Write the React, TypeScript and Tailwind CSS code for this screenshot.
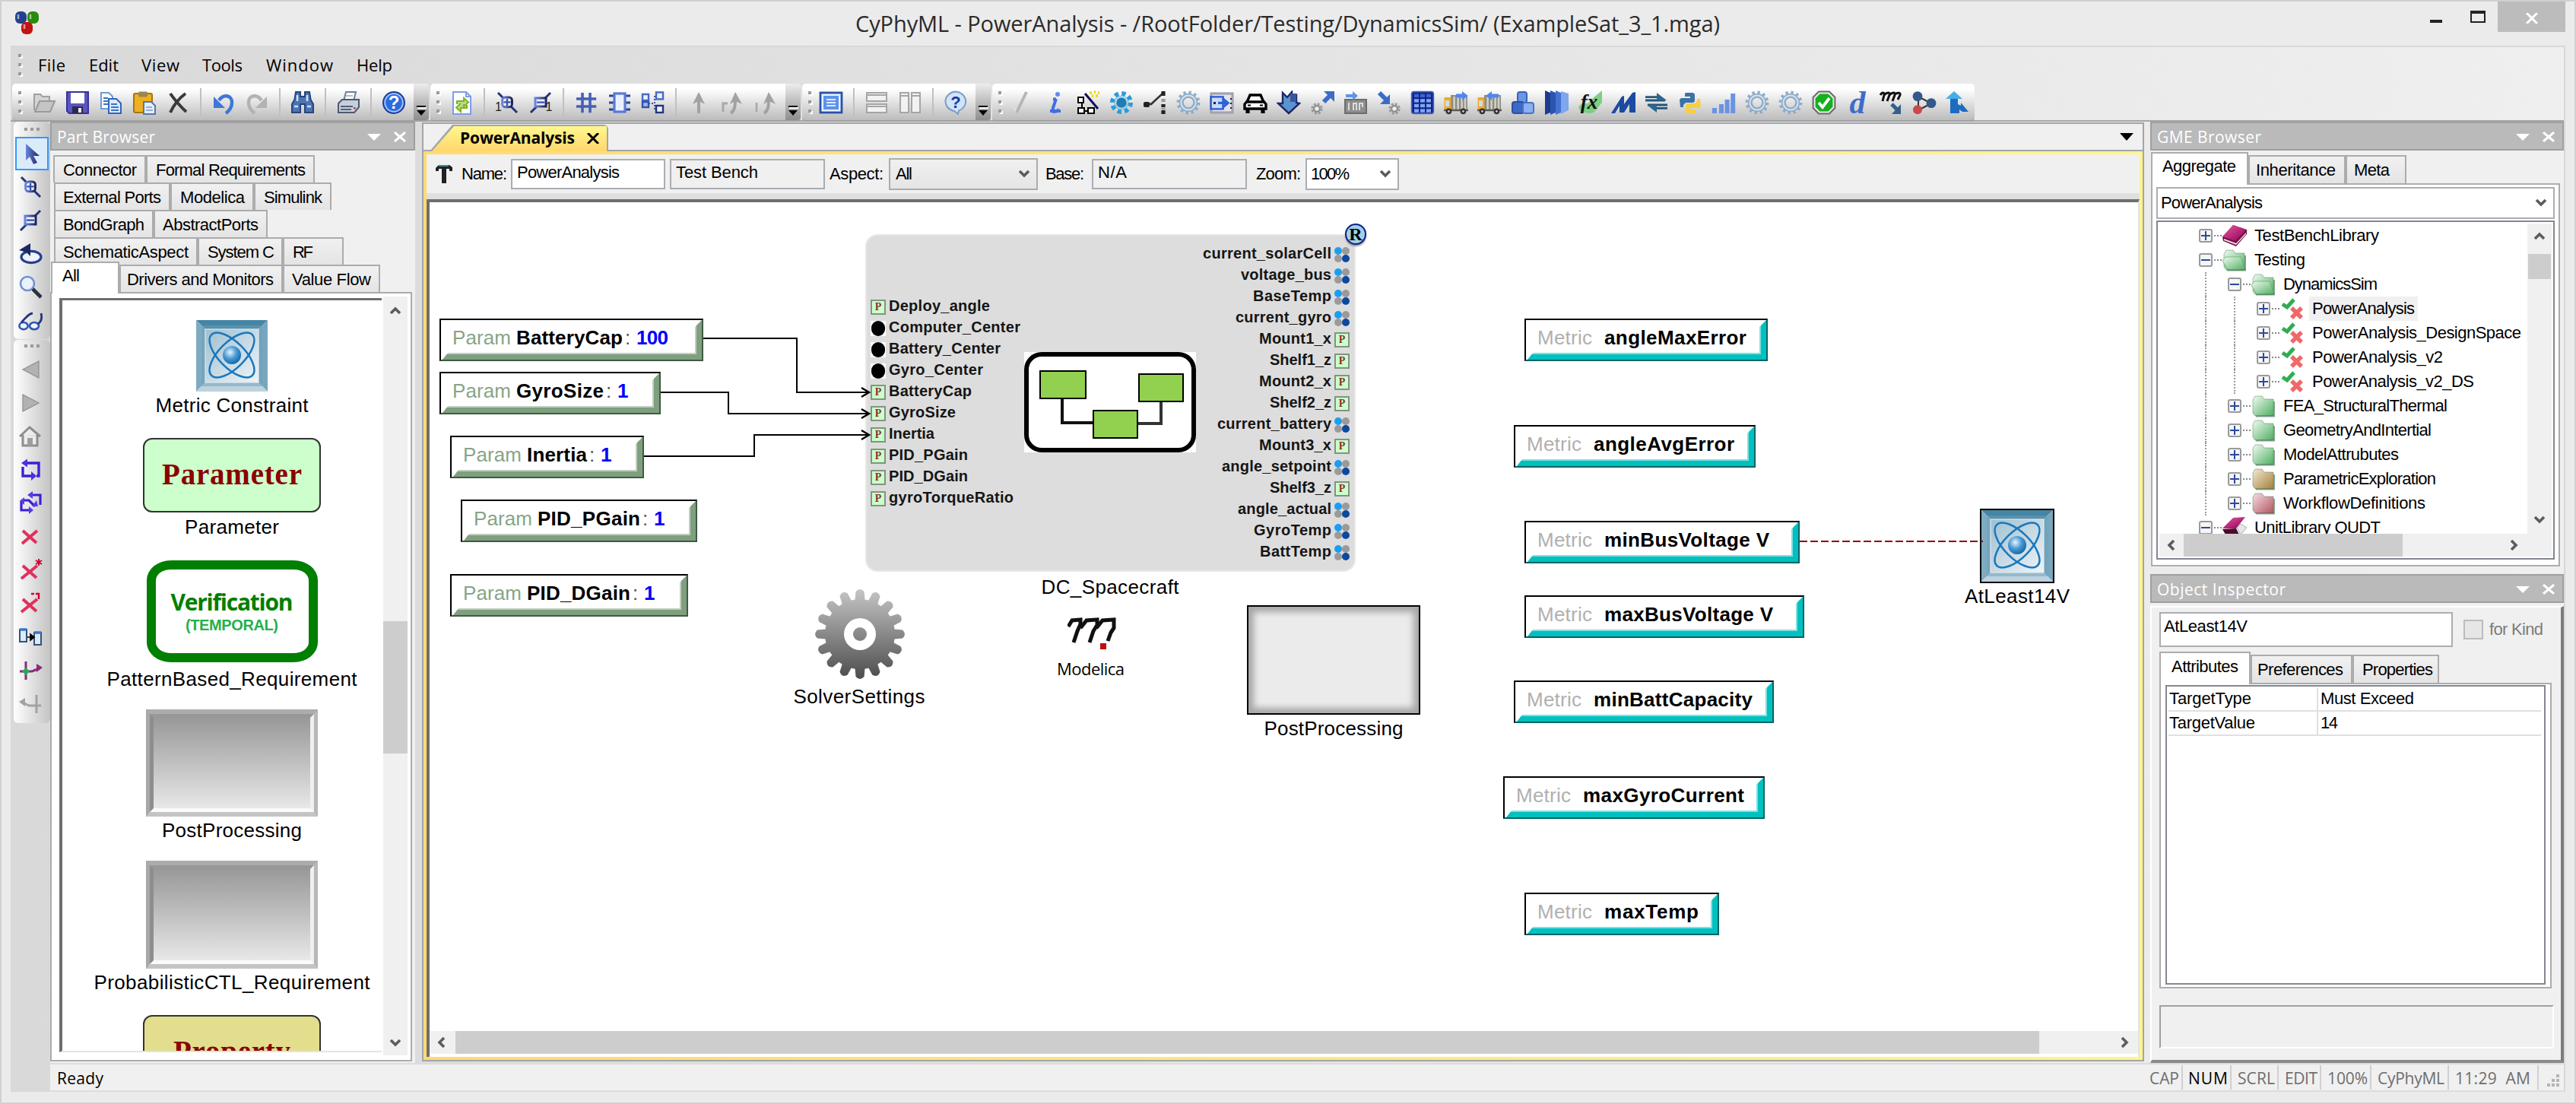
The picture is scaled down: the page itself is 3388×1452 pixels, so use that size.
import { useLayoutEffect, useRef, useState, type ReactNode } from "react";

/* Single line of text whose tracking is computed so it spans `w` pixels. */
function T({ w, className = "", children }: { w: number; className?: string; children: string }) {
  const ref = useRef<HTMLSpanElement>(null);
  const [ls, setLs] = useState(0);
  useLayoutEffect(() => {
    const el = ref.current;
    if (!el) return;
    el.style.letterSpacing = "0px";
    const natural = el.getBoundingClientRect().width;
    const v = children.length > 1 ? (w - natural) / (children.length - 1) : 0;
    el.style.letterSpacing = `${v}px`;
    setLs(v);
  }, [w, children]);
  return (
    <span className="block shrink-0 overflow-visible whitespace-pre" style={{ width: w }}>
      <span ref={ref} className={`inline-block whitespace-pre ${className}`} style={{ letterSpacing: ls }}>
        {children}
      </span>
    </span>
  );
}

const Svg = ({ children, className = "size-8" }: { children: ReactNode; className?: string }) => (
  <svg viewBox="0 0 16 16" className={`shrink-0 ${className}`} fill="none">
    {children}
  </svg>
);

const Defs = () => (
  <svg className="absolute size-0">
    <defs>
      <linearGradient id="blue" x1="0" y1="0" x2="1" y2="1">
        <stop offset="0" stopColor="#8fb4f5" />
        <stop offset="1" stopColor="#1b3f9c" />
      </linearGradient>
      <linearGradient id="navy" x1="0" y1="0" x2="1" y2="0">
        <stop offset="0" stopColor="#6a86e0" />
        <stop offset="1" stopColor="#1b2358" />
      </linearGradient>
      <linearGradient id="gearGrad" x1="0" y1="0" x2="0" y2="1">
        <stop offset="0" stopColor="#c6c6c6" />
        <stop offset="1" stopColor="#4c4c4c" />
      </linearGradient>
      <linearGradient id="inner" x1="0" y1="0" x2="1" y2="1">
        <stop offset="0" stopColor="#9ebfd0" />
        <stop offset="1" stopColor="#eef4f8" />
      </linearGradient>
      <radialGradient id="ball" cx="0.4" cy="0.35" r="0.7">
        <stop offset="0" stopColor="#eaf5ff" />
        <stop offset="0.5" stopColor="#4a9ad2" />
        <stop offset="1" stopColor="#0a64a8" />
      </radialGradient>
      <linearGradient id="gFolder" x1="0" y1="0" x2="1" y2="1">
        <stop offset="0" stopColor="#f0fbf1" />
        <stop offset="1" stopColor="#4fae62" />
      </linearGradient>
      <linearGradient id="bFolder" x1="0" y1="0" x2="1" y2="1">
        <stop offset="0" stopColor="#f3e8d2" />
        <stop offset="1" stopColor="#a5803c" />
      </linearGradient>
      <linearGradient id="rFolder" x1="0" y1="0" x2="1" y2="1">
        <stop offset="0" stopColor="#f8dde0" />
        <stop offset="1" stopColor="#b25563" />
      </linearGradient>
      <linearGradient id="book" x1="0" y1="0" x2="1" y2="1">
        <stop offset="0" stopColor="#e85aa8" />
        <stop offset="1" stopColor="#8c0050" />
      </linearGradient>
    </defs>
  </svg>
);

const Gear = ({ c = "#8fabc7" }: { c?: string }) => (
  <Svg>
    <circle cx="8" cy="8" r="6.6" stroke={c} strokeWidth="2.2" strokeDasharray="1.6 1.86" />
    <circle cx="8" cy="8" r="4.6" stroke={c} strokeWidth="3" />
    <circle cx="8" cy="8" r="4.8" stroke="#d3e2f0" strokeWidth="1" />
  </Svg>
);

const Truck = ({ back = false }: { back?: boolean }) => (
  <Svg>
    <rect x="4.500" y="3" width="11" height="10.500" fill="#8c8c84" />
    <path d="M6.800 4v8.500M9.300 4v8.500M11.800 4v8.500M14 4v8.500" stroke="#d0d0c8" strokeWidth="1.300" />
    <path d="M.3 4.500h4.400v9H.3z" fill="#f5a81c" />
    <path d="M1 6.500h2.500v4H1z" fill="#c6dcf2" />
    <path d="M0 13h16" stroke="#5a5a50" strokeWidth="1.200" />
    <circle cx="3.200" cy="13.700" r="1.900" fill="#333" />
    <circle cx="3.200" cy="13.700" r=".7" fill="#ccc" />
    <circle cx="12.700" cy="13.700" r="1.900" fill="#333" />
    <circle cx="12.700" cy="13.700" r=".7" fill="#ccc" />
    {back ? (
      <path d="M14 2.300H9.500V.5L5.500 3.500l4 3V4.800H14z" fill="#4f86f0" />
    ) : (
      <path d="M8 2.300h4V.5l3.800 3-3.800 3V4.800H8z" fill="#4f86f0" />
    )}
  </Svg>
);

const GreyUp = ({ k }: { k: number }) => (
  <Svg>
    <path d={k === 0 ? "M8 15V4" : "M7 15c3-2 3-5 3-11"} stroke="#a2a2a2" strokeWidth="2" />
    <path d={k === 0 ? "M8 1l4 8-4-2-4 2z" : "M10 1l4.500 8-4.500-2-3.500 2z"} fill="#a2a2a2" />
    {k === 1 && <path d="M2 14V8.500h3" stroke="#a8a8a8" strokeWidth="1.500" />}
    {k === 2 && <path d="M2 14V8" stroke="#a8a8a8" strokeWidth="1.300" />}
  </Svg>
);

const Zoom = ({ minus = false, digit = false }: { minus?: boolean; digit?: boolean }) => (
  <Svg>
    <path
      d={minus ? "M14.500 1.500L10.500 5.500M5.500 10.500L1.500 14.500" : "M2 1.500L5.500 5M10.500 10.500L14.500 14.500"}
      stroke="#24357e"
      strokeWidth="1.500"
    />
    {minus ? (
      <rect x="4.500" y="5" width="7" height="5.500" fill="#e9efff" stroke="url(#navy)" strokeWidth="1.500" />
    ) : (
      <rect x="4.800" y="4.500" width="6.400" height="6.400" rx="2" fill="#e9efff" stroke="url(#navy)" strokeWidth="1.500" />
    )}
    <path d={minus ? "M5.500 7.800h5" : "M8 5.500v4.500M5.700 7.700h4.600"} stroke="#3a52a8" strokeWidth="1.200" />
    {digit && (
      <text x={minus ? 11.300 : 0} y="13.500" fontSize="8" fill="#222" fontFamily="Liberation Sans">
        1
      </text>
    )}
  </Svg>
);

const I: Record<string, ReactNode> = {
  open: (
    <Svg>
      <path d="M1.500 13V2.500h4L7 4h4.500v4" stroke="#a0a0a0" fill="#d4d4d4" />
      <path d="M2 14L5 7h10l-3 7z" fill="#c4c4c4" stroke="#9a9a9a" />
    </Svg>
  ),
  save: (
    <Svg>
      <path d="M1 1h14v14H2.500L1 13.500z" fill="#5a55c0" stroke="#37329a" />
      <rect x="3.500" y="1.500" width="9" height="7" fill="#fff" />
      <rect x="4.500" y="10.500" width="7" height="4.500" fill="#2a2a50" />
      <rect x="8.500" y="11.500" width="2" height="3" fill="#e8e8f8" />
    </Svg>
  ),
  copy: (
    <Svg>
      <path d="M1.500 1.500h5l2.500 2.500v8H1.500z" fill="#fff" stroke="#6f9ad8" />
      <path d="M6.500 5.500h5l3 3v6.500h-8z" fill="#dce9fb" stroke="#2f66b8" />
      <path d="M8 9h4M8 11h5M8 13h5M3 5h3M3 7h3M3 9h3" stroke="#3a75c8" strokeWidth=".9" />
    </Svg>
  ),
  paste: (
    <Svg>
      <rect x="1" y="2" width="12" height="12.500" rx="1" fill="#eeb020" stroke="#a87410" />
      <rect x="4" y=".8" width="6" height="3.400" rx="1" fill="#9a8650" />
      <path d="M7.500 7.500h5l2.500 2.500v5.500H7.500z" fill="#e6eefa" stroke="#5577a8" />
      <path d="M9 11h4M9 13h4.500" stroke="#7d9ac4" strokeWidth=".8" />
    </Svg>
  ),
  del: (
    <Svg>
      <path d="M3 2c2 3 7 9 10.500 12M13 2C9 5 5 10 3 14.500" stroke="#3a3a3a" strokeWidth="2" />
    </Svg>
  ),
  undo: (
    <Svg>
      <path d="M5 6.500c3-4.500 9-3.500 8.500 2-.2 3-2 5-4 6.500" stroke="#3f76d8" strokeWidth="2.200" />
      <path d="M1.500 4v7.500H9z" fill="#3f76d8" />
    </Svg>
  ),
  redo: (
    <Svg>
      <path d="M11 6.500c-3-4.500-9-3.500-8.500 2 .2 3 2 5 4 6.500" stroke="#b2b2b2" strokeWidth="2.200" />
      <path d="M14.500 4v7.500H7z" fill="#b2b2b2" />
    </Svg>
  ),
  find: (
    <Svg>
      <path d="M3.500 1h3v3h3V1h3l.8 5 1.700 3v5.500H9.500V9h-3v5.500H1V9l1.700-3z" fill="#4c74b4" stroke="#24467e" />
      <path d="M2.500 10.500h2.500M11 10.500h2.500M4.500 3v4M11 3v4" stroke="#cfe0f8" strokeWidth="1.300" />
    </Svg>
  ),
  print: (
    <Svg>
      <path d="M5 7l1.500-6H13l-1.500 6z" fill="#fff" stroke="#6d7f96" />
      <path d="M1.500 8.500L4 6h11v5l-3 3.500H1.500z" fill="#c6cfdb" stroke="#4a5a70" />
      <path d="M3 10.500h8M3 12.500h7" stroke="#516076" />
      <path d="M6.500 3.500h4.500" stroke="#9aa" strokeWidth=".8" />
      <rect x="11.500" y="11" width="1.300" height="1.200" fill="#c33" />
    </Svg>
  ),
  help: (
    <Svg>
      <circle cx="8" cy="8" r="7" fill="#2a6be0" stroke="#1c3f98" />
      <circle cx="8" cy="8" r="5.900" stroke="#a9c6f8" strokeWidth=".9" />
      <text x="8" y="12.200" textAnchor="middle" fontSize="12" fontWeight="700" fill="#fff" fontFamily="Liberation Sans">
        ?
      </text>
    </Svg>
  ),
  refresh: (
    <Svg>
      <path d="M2.500 1h8.500l3 3v11.500H2.500z" fill="#fff" stroke="#7d9cf0" />
      <path d="M11 1v3h3" stroke="#7d9cf0" />
      <path d="M5 9V7h4.500V5l3 2.800-3 2.700V9M11.500 9.500v2H7.500V14l-3-2.800 3-2.700" stroke="#7db51c" strokeWidth="1" fill="#7db51c" fillOpacity=".5" />
    </Svg>
  ),
  z1: <Zoom digit />,
  z2: <Zoom minus digit />,
  hash: (
    <Svg>
      <path d="M5.500 1.500v13.100M1.500 10.500h13.100" stroke="#4660b8" strokeWidth="1.800" />
      <path d="M10.500 1.500v13.100M1.500 5.500h13.100" stroke="#4660b8" strokeWidth="1.800" />
    </Svg>
  ),
  chip: (
    <Svg>
      <path d="M1 3.500h3M1 8h3M1 12.500h3M12 3.500h3M12 8h3M12 12.500h3" stroke="#2c4496" strokeWidth="1.600" />
      <rect x="4.500" y="2" width="7" height="12" fill="#e8f0ff" stroke="#5b7ad4" strokeWidth="1.600" />
    </Svg>
  ),
  tree: (
    <Svg>
      <path d="M5 8.500h4M5 3.500v5M9 3.500v9.500" stroke="#3a4f9c" strokeWidth=".9" strokeDasharray="1 1" />
      <rect x="1" y="2.500" width="4" height="4" fill="#e8f0ff" stroke="#4868c4" strokeWidth="1.200" />
      <rect x="1" y="7.500" width="4" height="3.500" fill="#9fb7f4" stroke="#3450a8" strokeWidth="1.200" />
      <rect x="10" y="1.200" width="4.500" height="4.500" fill="#e8f0ff" stroke="#4868c4" strokeWidth="1.200" />
      <rect x="10" y="10" width="4.500" height="4.500" fill="#e8f0ff" stroke="#24357e" strokeWidth="1.200" />
    </Svg>
  ),
  up0: <GreyUp k={0} />,
  up1: <GreyUp k={1} />,
  up2: <GreyUp k={2} />,
  panel: (
    <Svg>
      <rect x="1" y="1.500" width="14" height="13" fill="#e6f0ff" stroke="#2850a8" strokeWidth="1.400" />
      <rect x="3" y="3.500" width="10" height="9" fill="#5d92ea" />
      <path d="M5 6h6M5 8h6M5 10h6" stroke="#dcebff" />
    </Svg>
  ),
  rows: (
    <Svg>
      <rect x="1.500" y="1.500" width="13" height="5.500" fill="#f2f2f2" stroke="#a5a5a5" />
      <rect x="1.500" y="9" width="13" height="5.500" fill="#f2f2f2" stroke="#a5a5a5" />
      <path d="M1.500 3h13M1.500 10.500h13" stroke="#a5a5a5" />
    </Svg>
  ),
  cols: (
    <Svg>
      <rect x="1.500" y="1.500" width="5.500" height="13" fill="#f2f2f2" stroke="#a5a5a5" />
      <rect x="9" y="1.500" width="5.500" height="13" fill="#f2f2f2" stroke="#a5a5a5" />
      <path d="M1.500 3.500h5.500M9 3.500h5.500" stroke="#a5a5a5" />
    </Svg>
  ),
  ask: (
    <Svg>
      <path d="M8 .8a7 6.400 0 0 1 2 12.400L9.500 15.500 7 13.500A7 6.400 0 0 1 8 .8z" fill="#cfe4fa" stroke="#7f9cc0" />
      <text x="8" y="11.500" textAnchor="middle" fontSize="11" fontWeight="700" fill="#123a9c" fontFamily="Liberation Sans">
        ?
      </text>
    </Svg>
  ),
  slash: (
    <Svg>
      <path d="M11.500 1L5 14.500" stroke="#b5b5b5" strokeWidth="2" />
      <path d="M1.500 8.500l3 5" stroke="#dcdcdc" strokeWidth="1.500" />
    </Svg>
  ),
  info: (
    <Svg>
      <path d="M9 5.500c-1 3.500-3.500 8.500-1.500 8.500s3-1 3.500-1.500M5 13.500h7M7 5.800h2" stroke="#3f6fe0" strokeWidth="2" />
      <circle cx="10" cy="2.500" r="1.500" fill="#5b8cf0" />
    </Svg>
  ),
  wand: (
    <Svg>
      <path d="M4 7v7M6 13.500h4" stroke="#000" />
      <rect x="1.500" y="4.500" width="3.500" height="3.500" fill="#fff" stroke="#000" />
      <rect x="1.500" y="11.500" width="4" height="3.500" fill="#fff" stroke="#000" />
      <rect x="8" y="11.500" width="4" height="3.500" fill="#fff" stroke="#000" />
      <path d="M6 2l8.500 10" stroke="#101060" strokeWidth="1.500" />
      <path d="M9 1.500h1.500M12 1h1M14.500 1.500h1M10.500 3.500h1M13 3.500h1.500" stroke="#e6dd00" strokeWidth="1.700" />
    </Svg>
  ),
  flower: (
    <Svg>
      <circle cx="8" cy="8" r="3.400" fill="#1f7db4" />
      <circle cx="8" cy="8" r="6" stroke="#2c9bd8" strokeWidth="3" strokeDasharray="2.600 2.110" />
      <circle cx="8" cy="8" r="4.400" stroke="#6cc2ea" strokeWidth=".8" />
    </Svg>
  ),
  graph: (
    <Svg>
      <path d="M2.500 8.500l3 .5L13 2" stroke="#333" strokeWidth="1.300" />
      <rect x=".5" y="7.500" width="4" height="3.500" rx="1" fill="#222" />
      <path d="M13.500.5v3M13.500 9v2M13.500 13v2.500" stroke="#222" strokeWidth="2.600" />
      <path d="M13.500 5.500v2M13.500 11.500v1" stroke="#999" strokeWidth="2.600" />
    </Svg>
  ),
  gear: <Gear />,
  transfer: (
    <Svg>
      <rect x="1" y="2" width="14" height="12.500" fill="#e2e4ea" stroke="#a0a4b0" strokeWidth="1.600" />
      <path d="M.8 4.200h8v8h-8z" fill="#c6dafc" stroke="#2a55d0" strokeWidth="1.200" />
      <path d="M5.500 8.200h6M8.500 5.300l3.500 2.900-3.500 2.900" stroke="#2a62d8" strokeWidth="1.600" />
      <rect x="2.500" y="7.500" width="1.500" height="1.500" fill="#222" />
      <path d="M14 5v1M14 8v1M14 11v1" stroke="#222" />
    </Svg>
  ),
  car: (
    <Svg>
      <path d="M3 6.500L4.500 3h7L13 6.500l2 2.500v3H1V9z" fill="#fff" stroke="#000" strokeWidth="1.700" />
      <path d="M2 7.500h12" stroke="#000" strokeWidth="1.700" />
      <path d="M3 12v3M13 12v3" stroke="#000" strokeWidth="2.600" />
      <path d="M3 9.800h10" stroke="#000" strokeDasharray="2 6" />
    </Svg>
  ),
  arrowDn: (
    <Svg>
      <path d="M4 1.500l3 3 3-3.500v3l3-1v5l2 .5L8 15 1 8.500h3z" fill="#5b93d0" stroke="#1c2a68" strokeWidth="1.200" />
      <path d="M9 2h4v5.500H9z" fill="#3a55a0" />
    </Svg>
  ),
  gearUp: (
    <Svg>
      <path d="M9 7.500L13 3.500" stroke="#3c6cc8" strokeWidth="3" />
      <path d="M9 .5h7v7z" fill="#3c6cc8" />
      <circle cx="4.500" cy="12" r="3" stroke="#9a9a9a" strokeWidth="1.700" strokeDasharray="1.400 .95" />
      <circle cx="4.500" cy="12" r="1.900" fill="#eee" stroke="#8a8a8a" />
    </Svg>
  ),
  bin: (
    <Svg>
      <rect x="1" y="6" width="14" height="9" fill="#8e8e8e" stroke="#6c6c6c" />
      <path d="M3.500 13V8M6.500 13V8M6.500 8.500h2V13M10.500 13V8.500h2V11" stroke="#dcdcdc" />
      <path d="M1.500 2.500H6V.5l3.500 3L6 6.500v-2H1.500z" fill="#5b95ec" />
    </Svg>
  ),
  gearDn: (
    <Svg>
      <path d="M1.500 1.500L6 6" stroke="#3c6cc8" strokeWidth="3" />
      <path d="M8.500 2.500v6.500H2z" fill="#3c6cc8" />
      <circle cx="11.500" cy="12" r="3" stroke="#9a9a9a" strokeWidth="1.700" strokeDasharray="1.400 .95" />
      <circle cx="11.500" cy="12" r="1.900" fill="#eee" stroke="#8a8a8a" />
    </Svg>
  ),
  grid: (
    <Svg>
      <rect x=".8" y=".8" width="14.400" height="14.400" rx="1.500" fill="#10248c" stroke="#4a62b8" strokeWidth=".8" />
      {[2.5, 6.5, 10.5].map((x) =>
        [2.3, 5.6, 8.9, 12.2].map((y) => <rect key={`${x}-${y}`} x={x} y={y} width="3" height="2.200" fill={y > 5 ? "#7fa6f2" : "#3a66cc"} />),
      )}
    </Svg>
  ),
  truck: <Truck />,
  truckB: <Truck back />,
  cubes: (
    <Svg>
      <rect x="4.500" y="1" width="6" height="7" rx="1.500" fill="#6b97e8" stroke="#3c64b8" />
      <rect x="1" y="7.500" width="7.500" height="7.500" rx="1.500" fill="#3c68c8" stroke="#2c509c" />
      <rect x="8" y="8" width="7" height="7" rx="1.500" fill="#8cb0f2" stroke="#4a72c8" />
    </Svg>
  ),
  books: (
    <Svg>
      <path d="M.5 0l3.500 1.500v13L.500 16z" fill="#1c3c8c" />
      <path d="M4 0l3.500 1.500v13L4 16z" fill="#2c54b0" />
      <path d="M7.500 0L11 1.500v13L7.500 16z" fill="#4472d0" />
      <path d="M11 .5l5 1.500v11l-5 2.500z" fill="#7fa6ee" />
    </Svg>
  ),
  fx: (
    <Svg>
      <path d="M.5 11c2-4 5-1 7-3 2-3 4-4 8.500-8v8c-3 3-4 7-8 7-3 0-7-1-7.500-4z" fill="#7fce84" />
      <text x="7.500" y="12" textAnchor="middle" fontSize="13.500" fontStyle="italic" fontWeight="700" fill="#111" fontFamily="Liberation Serif">
        fx
      </text>
    </Svg>
  ),
  zig: (
    <Svg>
      <path d="M0 15L7 4l1.500-.5V9L14 1.500l2-.5V14.500h-4V9L8.500 14.500H5.500V10L2.500 15z" fill="#1c4aa0" />
    </Svg>
  ),
  swap: (
    <Svg>
      <path d="M.5 6.500h13M2 9.500h13M.5 4.300h10M5 11.700h10" stroke="#24567c" strokeWidth="1.400" />
      <path d="M8 1.500l6.500 5H8zM8 14.500L1.500 9.500H8z" fill="#2c6590" />
    </Svg>
  ),
  python: (
    <Svg>
      <path d="M5 1.500h5l1 1v4.500l-1 1H5L3.500 9.500v1.500H1.500L1 6l1-1h6V4H4.500V2z" fill="#3c72a4" />
      <path d="M11 15H6l-1-1v-4.500l1-1h5L12.500 7V5.500h2L15 10.500l-1 1H8v1h3.500v2z" fill="#f6cf45" />
    </Svg>
  ),
  bars: (
    <Svg>
      <path d="M.5 11.500h3V15h-3zM5 9h3v6H5zM8.800 6h3v9h-3zM12.600 2h3v13h-3z" fill="#6a94e0" />
    </Svg>
  ),
  ok: (
    <Svg>
      <path d="M4.500.8h7L15.200 4.500v7L11.500 15.200h-7L.8 11.500v-7z" fill="#e8e8e8" stroke="#6a6a6a" />
      <path d="M5.200 2.300h5.600l2.900 2.900v5.600l-2.900 2.900H5.200l-2.900-2.900V5.200z" fill="#14b01e" />
      <path d="M4.500 8l2.500 3 4.500-6" stroke="#fff" strokeWidth="1.900" />
    </Svg>
  ),
  d: (
    <span className="flex size-8 items-center justify-center font-['Liberation_Serif',serif] text-[42px] leading-8 font-bold text-[#3f6cc8] italic">
      d
    </span>
  ),
  mod: (
    <Svg>
      <path d="M1 3c1-2 3-2 2.500 0L2.500 7M3.500 3c2-2 4-2 3.500 0L5.500 7M7 3c2-2 4-2 3.500 0L9 7M10.500 2.500c2-1.500 4-1 3.500.5L12.500 6" stroke="#111" strokeWidth="1.500" />
      <path d="M8.500 9l3.500 3.500" stroke="#33608c" strokeWidth="2.600" />
      <path d="M14.500 9v6.500H8.500z" fill="#33608c" />
    </Svg>
  ),
  nodes: (
    <Svg>
      <path d="M4 4l8.500 4.500L4 13z" stroke="#333" />
      <circle cx="3.500" cy="3.800" r="3.200" fill="#34588c" />
      <circle cx="12.500" cy="8.300" r="3.200" fill="#34588c" />
      <circle cx="3.500" cy="12.600" r="3" fill="#cc4848" />
    </Svg>
  ),
  upBlue: (
    <Svg>
      <path d="M3 5h5v4l2 1V8l5 6h-4l-2-1.500V15H3z" fill="#1c6cc0" />
      <path d="M5.500.5L11 5.500H0z" fill="#45aee8" />
    </Svg>
  ),
  /* vertical mode bar */
  cursor: (
    <Svg>
      <path d="M5 1.500v11l2.500-2.500 2.500 5 2.500-1-2.500-4.500h4z" fill="url(#navy)" />
    </Svg>
  ),
  vz1: <Zoom />,
  vz2: <Zoom minus />,
  loopUp: (
    <Svg>
      <ellipse cx="8.500" cy="10" rx="6.500" ry="3.800" stroke="#24408c" strokeWidth="1.600" fill="#eef3ff" />
      <path d="M.5 5.500L8 1v8.500L5.500 7z" fill="#1b2a60" />
    </Svg>
  ),
  lens: (
    <Svg>
      <circle cx="6" cy="5.500" r="4.500" fill="#e9f1fc" stroke="#6f94cc" strokeWidth="1.300" />
      <path d="M9.500 9l5.500 5.500" stroke="#2b3140" strokeWidth="2.300" />
    </Svg>
  ),
  link: (
    <Svg>
      <ellipse cx="3.500" cy="11.300" rx="2.800" ry="2.300" stroke="#2c56b0" strokeWidth="1.300" fill="#eef3ff" />
      <ellipse cx="10.500" cy="11.300" rx="3" ry="2.300" stroke="#2c56b0" strokeWidth="1.300" fill="#eef3ff" />
      <path d="M2 9c3-3 5-6 7.500-6M13 10c3-2 2.500-5 2-7" stroke="#24357e" strokeWidth="1.400" />
    </Svg>
  ),
  back: (
    <Svg>
      <path d="M13.500 2.500v11L3 8z" fill="#b2b2b2" stroke="#8e8e8e" strokeWidth=".6" />
    </Svg>
  ),
  fwd: (
    <Svg>
      <path d="M3 2.500v11L13.500 8z" fill="#b2b2b2" stroke="#8e8e8e" strokeWidth=".6" />
    </Svg>
  ),
  home: (
    <Svg>
      <path d="M1 8l6.500-6L14.500 8M3 7v7h9.500V7" stroke="#8e8e8e" strokeWidth="1.500" fill="#ececec" />
      <rect x="6" y="9" width="3.500" height="5" fill="#9e9e9e" />
    </Svg>
  ),
  cyc: (
    <Svg>
      <path d="M5 3.500h8.500v8.500H12M11 12H3V6" stroke="#3a20d8" strokeWidth="1.700" />
      <path d="M2 3.500L6 .8v5.400zM12 12L8.500 9v6z" fill="#4a30e0" />
    </Svg>
  ),
  cyc2: (
    <Svg>
      <path d="M8 2.500h6.500v6.500M2 6h5l4 4M2 6v6.500h6" stroke="#3a20d8" strokeWidth="1.600" />
      <path d="M6 2.500L9.500 0v5zM1 6.500l3-2.500v5zM10 12.500L7 10v5zM13 10l-4 0 3-4z" fill="#5a3ae8" />
    </Svg>
  ),
  x1: (
    <Svg>
      <path d="M3 4l9 8M12.500 4L2.500 12.500" stroke="#e0305c" strokeWidth="2" />
    </Svg>
  ),
  x2: (
    <Svg>
      <path d="M3 5l9 8M12.500 5L2 13.500" stroke="#e0305c" strokeWidth="2" />
      <path d="M13.500.5v4.500M11.500 1.500l4 2.500M15.500 1.500l-4 2.500" stroke="#d00030" />
    </Svg>
  ),
  x3: (
    <Svg>
      <path d="M3 5l9 8M12.500 5L2 13.500" stroke="#e0305c" strokeWidth="2" />
      <path d="M8.500 1.500h2M11.500 1.500h2V5" stroke="#d00030" strokeWidth="1.200" />
    </Svg>
  ),
  boxes: (
    <Svg>
      <rect x="1" y="3" width="4.500" height="8" fill="#dcebfa" stroke="#34507c" />
      <rect x="10.500" y="5" width="4.500" height="8" fill="#dcebfa" stroke="#34507c" />
      <path d="M1 3h4.500M10.500 5h4.500" stroke="#3f76c0" strokeWidth="1.700" />
      <path d="M6 8h4M8 6l2.500 2L8 10z" stroke="#000" fill="#000" strokeWidth=".8" />
    </Svg>
  ),
  cross: (
    <Svg>
      <path d="M5 2v12M1 8.500h8l5-2" stroke="#8c2a7c" strokeWidth="1.500" />
      <path d="M12 3.500l4 2.500-4 3z" fill="#8c2a7c" />
      <path d="M5 6l2.500 2.500L5 11 2.500 8.500z" fill="#20b050" />
    </Svg>
  ),
  crossG: (
    <Svg>
      <path d="M12 2v12M15 9H7L3 7" stroke="#a2a2a2" strokeWidth="1.500" />
      <path d="M4.500 4L.5 6.500l4 3z" fill="#a2a2a2" />
    </Svg>
  ),
};

const HGrip = () => (
  <div className="flex flex-col gap-2">
    <i className="size-1 bg-[#9a9a9a] shadow-[2px_2px_0_#fff]" />
    <i className="size-1 bg-[#9a9a9a] shadow-[2px_2px_0_#fff]" />
    <i className="size-1 bg-[#9a9a9a] shadow-[2px_2px_0_#fff]" />
  </div>
);

const VGrip = () => (
  <div className="flex justify-center gap-1">
    <i className="size-1 bg-[#9a9a9a]" />
    <i className="size-1 bg-[#9a9a9a]" />
    <i className="size-1 bg-[#9a9a9a]" />
  </div>
);

function Bar({ items, lead, chevron = true }: { items: string; lead: string; chevron?: boolean }) {
  return (
    <div className="mr-0.5 flex h-[50px] items-stretch overflow-hidden rounded-[5px] border-b-2 border-[#a0a0a0] bg-linear-to-b from-white from-15% to-[#bcbcbc]">
      <div className={`flex items-center pl-2 ${lead}`}>
        <HGrip />
      </div>
      {items.split(" ").map((k, i) =>
        k === "|" ? (
          <div key={i} className="flex w-4 items-center justify-center">
            <i className="h-9 w-0.5 bg-[#c0c0c0]" />
          </div>
        ) : (
          <div key={i} className="flex w-11 items-center justify-center pt-0.5">
            {I[k]}
          </div>
        ),
      )}
      {chevron && (
        <div className="ml-1 flex w-5 flex-col items-center justify-end gap-1 bg-linear-to-b from-[#ededed] to-[#8e8e8e] pb-1.5">
          <i className="h-0.5 w-3 bg-black shadow-[1px_2px_0_#fff]" />
          <i className="size-0 border-x-[6px] border-t-[7px] border-x-transparent border-t-black" />
        </div>
      )}
    </div>
  );
}

const Chev = ({ dir }: { dir: "u" | "d" | "l" | "r" }) => (
  <svg viewBox="0 0 16 16" className="size-4 shrink-0" fill="none">
    <path
      d={{ u: "M2 12l6-6 6 6", d: "M2 4l6 6 6-6", l: "M11 2L5 8l6 6", r: "M5 2l6 6-6 6" }[dir]}
      stroke="#5c5c5c"
      strokeWidth="3.600"
    />
  </svg>
);

const PanelHeader = ({ title, w }: { title: string; w: number }) => (
  <div className="flex h-[38px] shrink-0 items-center border-2 border-[#9f9f9f] bg-[#bababa] pt-0.5 pr-2.5 pl-[7px] font-['Open_Sans',sans-serif] text-[21px] leading-none font-medium text-white">
    <T w={w}>{title}</T>
    <i className="ml-auto size-0 border-x-[9px] border-t-[9px] border-x-transparent border-t-white" />
    <svg viewBox="0 0 16 14" className="ml-[17px] h-3.5 w-4" stroke="#fff" strokeWidth="3">
      <path d="M1 1l14 12M15 1L1 13" />
    </svg>
  </div>
);

const Tab = ({ label, w, box, h = "h-9" }: { label: string; w: number; box: string; h?: string }) => (
  <div className={`flex ${h} items-center border-2 border-b-0 border-[#acacac] bg-linear-to-b from-[#f1f1f1] to-[#e4e4e4] pt-px ${box}`}>
    <T w={w}>{label}</T>
  </div>
);

const Atom = ({ className }: { className: string }) => (
  <svg viewBox="0 0 94 94" className={className} preserveAspectRatio="none">
    <path d="M0 0h94L82 12H12z" fill="#4585a5" />
    <path d="M0 0v94l12-12V12z" fill="#7fabc2" />
    <path d="M94 0v94L82 82V12z" fill="#78a6be" />
    <path d="M0 94h94L82 82H12z" fill="#bdd2de" />
    <path d="M7 7h80v80H7z" fill="#6c9fb8" fillOpacity=".5" />
    <path d="M12 12h70v70H12z" fill="url(#inner)" stroke="#dfeaf0" strokeOpacity=".6" strokeWidth="2" />
    <ellipse cx="47" cy="46" rx="38" ry="17" transform="rotate(45 47 46)" fill="none" stroke="#1a78bc" strokeWidth="2.500" />
    <ellipse cx="47" cy="46" rx="38" ry="17" transform="rotate(-45 47 46)" fill="none" stroke="#1a78bc" strokeWidth="2.500" />
    <circle cx="47" cy="46" r="12" fill="url(#ball)" />
  </svg>
);

const Plate = ({ h }: { h: string }) => (
  <div
    className={`w-[226px] border-t-[6px] border-r-[5px] border-b-[6px] border-l-[5px] border-t-[#acacac] border-r-[#b8b8b8] border-b-[#c4c4c4] border-l-[#a8a8a8] ${h}`}
  >
    <div className="h-full border-t-[5px] border-r-[5px] border-b-[5px] border-l-[5px] border-t-[#989898] border-r-[#f0f0f0] border-b-[#fafafa] border-l-[#8e8e8e] bg-linear-to-b from-[#999] to-[#e8e8e8]" />
  </div>
);

const PartLabel = ({ w, mt, children }: { w: number; mt: string; children: string }) => (
  <div className={`flex h-[30px] items-center pb-0.5 text-[26px] leading-none ${mt}`}>
    <T w={w}>{children}</T>
  </div>
);

function PartBrowser() {
  return (
    <section className="flex w-[480px] shrink-0 flex-col bg-[#f0f0f0] text-[22px] leading-none">
      <PanelHeader title="Part Browser" w={129} />
      <div className="mt-1.5 ml-1">
        <div className="flex">
          <Tab label="Connector" w={97} box="w-[122px] pl-[11px]" />
          <Tab label="Formal Requirements" w={197} box="w-[222px] pl-[11px]" />
        </div>
        <div className="ml-px flex">
          <Tab label="External Ports" w={129} box="w-[153px] pl-[10px]" />
          <Tab label="Modelica" w={85} box="w-[110px] pl-[11px]" />
          <Tab label="Simulink" w={77} box="w-[102px] pl-[11px]" />
        </div>
        <div className="ml-px flex">
          <Tab label="BondGraph" w={107} box="w-[131px] pl-[10px]" />
          <Tab label="AbstractPorts" w={126} box="w-[150px] pl-[10px]" />
        </div>
        <div className="ml-px flex">
          <Tab label="SchematicAspect" w={165} box="w-[189px] pl-[10px]" />
          <Tab label="System C" w={88} box="w-[112px] pl-[11px]" />
          <Tab label="RF" w={27} box="w-[80px] pl-[11px]" />
        </div>
      </div>
      <div className="z-10 -mt-1 -mb-0.5 ml-px flex items-end">
        <div className="flex h-[42px] w-[90px] items-center border-2 border-b-0 border-[#acacac] bg-white pb-1.5 pl-[13px]">
          <T w={23}>All</T>
        </div>
        <div className="mb-0.5 flex">
          <Tab label="Drivers and Monitors" w={193} box="w-[215px] pl-[8px]" />
          <Tab label="Value Flow" w={104} box="w-[128px] pl-[10px]" />
        </div>
      </div>
      <div className="flex h-[1012px] w-[476px] justify-between border-2 border-[#acacac] bg-white pr-1 pl-2.5">
        <div className="mt-1.5 h-[992px] w-[424px] overflow-hidden border-t-[3px] border-b-2 border-l-4 border-[#6e6e6e] border-b-[#e3e3e3] pl-[26px]">
          <div className="flex flex-col items-center pt-[26px]">
            <Atom className="h-[94px] w-[94px]" />
            <PartLabel w={201} mt="mt-1">Metric Constraint</PartLabel>
            <div className="mt-[27px] flex h-[98px] w-[234px] items-center justify-center rounded-[12px] border-2 border-[#333] bg-[#ccffcc] pb-1 font-['Liberation_Serif',serif] text-[39px] font-bold text-[#8b0000]">
              <T w={184}>Parameter</T>
            </div>
            <PartLabel w={124} mt="mt-[5px]">Parameter</PartLabel>
            <div className="mt-7 flex h-[134px] w-[225px] flex-col items-center justify-center rounded-[32px/26px] border-12 border-[#007f00] bg-white">
              <div className="flex h-8 items-center font-['Open_Sans',sans-serif] text-[30px] font-bold text-[#007f00]">
                <T w={161}>Verification</T>
              </div>
              <div className="mt-1 text-[20px] font-bold text-[#22b14c]">
                <T w={122}>(TEMPORAL)</T>
              </div>
            </div>
            <PartLabel w={329} mt="mt-2">PatternBased_Requirement</PartLabel>
            <div className="mt-6">
              <Plate h="h-[141px]" />
            </div>
            <PartLabel w={184} mt="mt-1">PostProcessing</PartLabel>
            <div className="mt-6">
              <Plate h="h-[142px]" />
            </div>
            <PartLabel w={363} mt="mt-1">ProbabilisticCTL_Requirement</PartLabel>
            <div className="mt-[27px] flex h-[98px] w-[234px] items-center justify-center rounded-[12px] border-2 border-[#333] bg-[#e3de8e] pb-1 font-['Liberation_Serif',serif] text-[39px] font-bold text-[#8b0000]">
              <T w={154}>Property</T>
            </div>
          </div>
        </div>
        <div className="mt-1 mb-1.5 flex w-8 flex-col items-center bg-[#f0f0f0]">
          <div className="mt-2.5 h-4">
            <Chev dir="u" />
          </div>
          <div className="mt-[401px] h-[174px] w-full bg-[#cdcdcd]" />
          <div className="mt-auto mb-2 h-4">
            <Chev dir="d" />
          </div>
        </div>
      </div>
    </section>
  );
}

/* ---------- diagram canvas ---------- */

type Tone = "green" | "cyan";
const Node = ({ x, y, w, tone, children }: { x: number; y: number; w: number; tone: Tone; children: ReactNode }) => (
  <div
    className={`absolute h-14 border-2 bg-white ${tone === "green" ? "border-t-black border-r-[#3f5a43] border-b-[#3f5a43] border-l-black" : "border-t-black border-r-[#006464] border-b-[#006464] border-l-black"}`}
    style={{ left: x, top: y, width: w }}
  >
    <div
      className={`h-full border-t-0 border-r-[7px] border-b-[7px] border-l-0 ${tone === "green" ? "border-[#7f9f7f]" : "border-[#00c0c0]"} [clip-path:polygon(0_0,100%_0,100%_100%,2px_100%,9px_calc(100%-9px),0_calc(100%-9px))]`}
    >
      <div
        className={`flex h-full items-center border-r-2 border-b-2 pt-[3px] pl-[15px] text-[26px] leading-none ${tone === "green" ? "border-[#bfd0bf]" : "border-[#80dfdf]"}`}
      >
        {children}
      </div>
    </div>
    <div className="absolute top-0 right-0 size-0 border-t-[9px] border-r-[9px] border-t-white border-r-transparent" />
  </div>
);

const params = [
  { x: 578, y: 419, w: 347, name: "BatteryCap", nw: 140, v: "100", vw: 42 },
  { x: 578, y: 489, w: 291, name: "GyroSize", nw: 115, v: "1", vw: 13 },
  { x: 592, y: 573, w: 255, name: "Inertia", nw: 79, v: "1", vw: 13 },
  { x: 606, y: 657, w: 311, name: "PID_PGain", nw: 135, v: "1", vw: 13 },
  { x: 592, y: 755, w: 313, name: "PID_DGain", nw: 136, v: "1", vw: 13 },
];

const metrics = [
  { x: 2005, y: 419, w: 320, name: "angleMaxError", nw: 187 },
  { x: 1991, y: 559, w: 318, name: "angleAvgError", nw: 185 },
  { x: 2005, y: 685, w: 362, name: "minBusVoltage V", nw: 217 },
  { x: 2005, y: 783, w: 368, name: "maxBusVoltage V", nw: 222 },
  { x: 1991, y: 895, w: 342, name: "minBattCapacity", nw: 209 },
  { x: 1977, y: 1021, w: 344, name: "maxGyroCurrent", nw: 212 },
  { x: 2005, y: 1174, w: 256, name: "maxTemp", nw: 124 },
];

const inPorts: [string, string, number][] = [
  ["p", "Deploy_angle", 133],
  ["c", "Computer_Center", 173],
  ["c", "Battery_Center", 147],
  ["c", "Gyro_Center", 124],
  ["p", "BatteryCap", 109],
  ["p", "GyroSize", 88],
  ["p", "Inertia", 60],
  ["p", "PID_PGain", 104],
  ["p", "PID_DGain", 104],
  ["p", "gyroTorqueRatio", 164],
];

const outPorts: [string, string, number][] = [
  ["s", "current_solarCell", 169],
  ["s", "voltage_bus", 119],
  ["s", "BaseTemp", 103],
  ["s", "current_gyro", 126],
  ["p", "Mount1_x", 95],
  ["p", "Shelf1_z", 81],
  ["p", "Mount2_x", 95],
  ["p", "Shelf2_z", 81],
  ["s", "current_battery", 150],
  ["p", "Mount3_x", 95],
  ["s", "angle_setpoint", 144],
  ["p", "Shelf3_z", 81],
  ["s", "angle_actual", 123],
  ["s", "GyroTemp", 102],
  ["s", "BattTemp", 94],
];

const Port = ({ kind }: { kind: string }) =>
  kind === "p" ? (
    <div className="flex size-5 items-center justify-center border-2 border-[#7e967e] bg-[#ccffcc] font-['Liberation_Serif',serif] text-[14px] leading-none font-bold text-[#8b3030]">
      P
    </div>
  ) : kind === "c" ? (
    <div className="size-5 bg-white">
      <div className="mx-auto h-5 w-[18px] rounded-full bg-black" />
    </div>
  ) : (
    <div className="grid size-5 grid-cols-2">
      <i className="rounded-full bg-[#1c9ef0]" />
      <i className="rounded-full bg-[#9a9a9a]" />
      <i className="rounded-full bg-[#9a9a9a]" />
      <i className="rounded-full bg-[#0c48a0]" />
    </div>
  );

const Caption = ({ cx, y, w, children }: { cx: number; y: number; w: number; children: string }) => (
  <div className="absolute text-[26px] leading-none" style={{ left: cx - w / 2, top: y }}>
    <T w={w}>{children}</T>
  </div>
);

function Canvas() {
  const teeth = Array.from({ length: 16 }, (_, i) => i * 22.5);
  return (
    <div className="relative min-h-0 flex-1 overflow-hidden bg-white">
      <div className="absolute -top-[266px] -left-[565px] h-[1452px] w-[3388px]">
        {params.map((p) => (
          <Node key={p.name} x={p.x} y={p.y} w={p.w} tone="green">
            <T w={77} className="text-[#86a586]">Param</T>
            <div className="ml-[7px] font-bold">
              <T w={p.nw}>{p.name}</T>
            </div>
            <span className="ml-[3px] w-[15px] text-[#555]">:</span>
            <T w={p.vw} className="font-bold text-[#0000ff]">{p.v}</T>
          </Node>
        ))}
        {metrics.map((m) => (
          <Node key={m.name} x={m.x} y={m.y} w={m.w} tone="cyan">
            <T w={72} className="text-[#b0b0b0]">Metric</T>
            <div className="ml-4 font-bold">
              <T w={m.nw}>{m.name}</T>
            </div>
          </Node>
        ))}

        {/* assembly block */}
        <div className="absolute top-[308px] left-[1138px] h-[444px] w-[645px] rounded-[16px] border-2 border-[#e8e8e8] bg-[#dddddd]" />
        <div className="absolute top-[390px] left-[1145px] text-[20px] leading-none font-bold text-[#151515]">
          {inPorts.map(([k, n, w]) => (
            <div key={n} className="flex h-7 items-center gap-1">
              <Port kind={k} />
              <div className="-mt-1">
                <T w={w}>{n}</T>
              </div>
            </div>
          ))}
        </div>
        <div className="absolute top-[321px] left-[1535px] w-60 text-[20px] leading-none font-bold text-[#151515]">
          {outPorts.map(([k, n, w]) => (
            <div key={n} className="flex h-7 items-center justify-end gap-1">
              <div className="-mt-1">
                <T w={w}>{n}</T>
              </div>
              <Port kind={k} />
            </div>
          ))}
        </div>
        <svg viewBox="0 0 226 132" className="absolute top-[463px] left-[1347px] h-[132px] w-[226px]">
          <rect width="226" height="132" fill="#fff" />
          <rect x="3" y="3" width="220" height="126" rx="20" fill="#fff" stroke="#000" strokeWidth="6" />
          <path d="M50 62v31h40" fill="none" stroke="#111" strokeWidth="4" />
          <path d="M180 66v28h-30" fill="none" stroke="#333" strokeWidth="4" />
          <g fill="#92d050" stroke="#000" strokeWidth="2">
            <rect x="21" y="25" width="60" height="36" />
            <rect x="151" y="29" width="58" height="36" />
            <rect x="91" y="77" width="58" height="36" />
          </g>
        </svg>
        <div className="absolute top-[294px] left-[1769px] flex size-7 items-center justify-center rounded-full border-2 border-[#10208c] bg-[#9fd2e8] font-['Liberation_Serif',serif] text-[24px] leading-none font-bold shadow-[0_2px_2px_#999]">
          R
        </div>

        <Caption cx={1460} y={759} w={181}>DC_Spacecraft</Caption>
        <Caption cx={1130} y={903} w={173}>SolverSettings</Caption>
        <Caption cx={1754} y={945} w={183}>PostProcessing</Caption>
        <Caption cx={2653} y={771} w={138}>AtLeast14V</Caption>
        <div className="absolute top-[868px] left-[1390px] font-['Open_Sans',sans-serif] text-[22px] leading-none">
          <T w={89}>Modelica</T>
        </div>

        <svg viewBox="-60 -60 120 120" className="absolute top-[774px] left-[1071px] size-[120px]">
          <mask id="gm">
            <circle r="46" fill="#fff" />
            {teeth.map((a) => (
              <path key={a} d="M-7 -40L-5.500 -56Q0 -62 5.500 -56L7 -40z" fill="#fff" transform={`rotate(${a})`} />
            ))}
            <circle r="21" fill="#000" />
            <circle r="9" fill="#fff" />
          </mask>
          <rect x="-60" y="-60" width="120" height="120" fill="url(#gearGrad)" mask="url(#gm)" />
        </svg>

        <svg viewBox="0 0 64 42" className="absolute top-[812px] left-[1404px] h-[42px] w-16" fill="none" stroke="#111" strokeWidth="5">
          <path d="M1 12L6 4L17 3V9L13 18L8 33" />
          <path d="M17 14L25 4L39 3V10L34 18L29 33" />
          <path d="M38 14L46 4L61 3V14L57 20L53 31" />
          <rect x="43" y="34" width="8" height="8" fill="#c01010" stroke="none" />
        </svg>

        <div className="absolute top-[796px] left-[1640px] h-36 w-[228px] border-2 border-black bg-[#ebebeb] shadow-[inset_0_0_8px_7px_#a6a6a6]" />
        <div className="absolute top-[669px] left-[2604px] size-[98px] border-2 border-black">
          <Atom className="size-full" />
        </div>

        <svg viewBox="0 0 3388 1452" className="pointer-events-none absolute inset-0 size-full" fill="none" stroke="#000" strokeWidth="2">
          <path d="M925 445H1048V516H1143" />
          <path d="M869 516H958V544H1143" />
          <path d="M847 600H992V572H1143" />
          <path d="M1133 510L1143 516L1133 522M1133 538L1143 544L1133 550M1133 566L1143 572L1133 578" strokeWidth="2.500" />
          <path d="M2367 712H2608" stroke="#900010" strokeDasharray="10 4" />
        </svg>
      </div>
    </div>
  );
}

const Field = ({ w, tw, children, white = false }: { w: string; tw: number; children: string; white?: boolean }) => (
  <div className={`flex h-10 items-center border-2 border-[#abadb3] pb-1 pl-[6px] ${w} ${white ? "bg-white" : "bg-[#f0f0f0]"}`}>
    <T w={tw}>{children}</T>
  </div>
);

function Editor() {
  return (
    <section className="mt-px ml-[9px] flex h-[1235px] w-[2265px] shrink-0 flex-col border-2 border-[#a3a5ab] bg-[#f0f0f0] text-[22px] leading-none">
      <div className="flex h-9 shrink-0 items-end border-b-2 border-[#a3a5ab] pl-2">
        <div className="-mb-0.5 h-[35px] w-[235px] rounded-tr-md bg-[#a3a5ab] [clip-path:polygon(0_100%,30px_0,100%_0,100%_100%)]">
          <div className="flex h-full items-center rounded-tr-md bg-linear-to-b from-[#fffa90] to-[#ffd66c] pl-[40px] font-['Open_Sans',sans-serif] text-[21px] font-bold [clip-path:polygon(3px_100%,32px_2px,calc(100%-2px)_2px,calc(100%-2px)_100%)]">
            <T w={151}>PowerAnalysis</T>
            <svg viewBox="0 0 16 14" className="ml-4 h-3.5 w-4" stroke="#000" strokeWidth="3">
              <path d="M1 0l14 14M15 0L1 14" />
            </svg>
          </div>
        </div>
        <i className="mr-3 mb-3 ml-auto size-0 border-x-[9px] border-t-[10px] border-x-transparent border-t-black" />
      </div>
      <div className="flex min-h-0 flex-1 flex-col bg-linear-to-r from-[#ffda76] to-[#fff58c] px-1 pt-1 pb-1">
        <div className="flex h-[51px] shrink-0 items-center bg-[#f0f0f0]">
          <svg viewBox="0 0 22 24" className="mr-3 ml-3 h-6 w-[22px]">
            <path d="M0 4l4-4h14l4 3v5h-4V5h-4v19H8V5H4v3H0z" fill="#222" />
            <path d="M4 1h13" stroke="#2f8f96" strokeWidth="2" />
          </svg>
          <T w={60}>Name:</T>
          <div className="ml-[5px]">
            <Field w="w-[203px]" tw={135} white>PowerAnalysis</Field>
          </div>
          <div className="ml-1.5">
            <Field w="w-[204px]" tw={108}>Test Bench</Field>
          </div>
          <div className="ml-1.5">
            <T w={71}>Aspect:</T>
          </div>
          <div className="ml-[7px] flex h-[42px] w-[196px] items-center justify-between border-2 border-[#acacac] bg-linear-to-b from-[#f0f0f0] to-[#e5e5e5] pr-2 pl-[7px]">
            <T w={22}>All</T>
            <Chev dir="d" />
          </div>
          <div className="ml-2.5">
            <T w={51}>Base:</T>
          </div>
          <div className="ml-2.5">
            <Field w="w-[204px]" tw={38}>N/A</Field>
          </div>
          <div className="ml-3">
            <T w={59}>Zoom:</T>
          </div>
          <div className="ml-[6px] flex h-[42px] w-[123px] items-center justify-between border-2 border-[#abadb3] bg-white pr-2 pl-[5px]">
            <T w={51}>100%</T>
            <Chev dir="d" />
          </div>
        </div>
        <div className="h-2 shrink-0 bg-[#dfdfdf]" />
        <div className="flex min-h-0 flex-1 flex-col border-t-4 border-r-2 border-l-4 border-t-[#6e6e6e] border-r-[#e3e3e3] border-l-[#6e6e6e] bg-white">
          <Canvas />
          <div className="mb-1 flex h-[30px] shrink-0 items-center bg-[#f0f0f0] pr-2.5 pl-2">
            <Chev dir="l" />
            <div className="ml-2.5 h-[30px] w-[2083px] bg-[#cdcdcd]" />
            <div className="ml-auto">
              <Chev dir="r" />
            </div>
          </div>
        </div>
      </div>
    </section>
  );
}

/* ---------- right column ---------- */

const Folder = ({ fill, open = false }: { fill: string; open?: boolean }) => (
  <svg viewBox="0 0 32 30" className="h-[30px] w-8">
    <path d="M2 7l3-5h9l3 4h12v22H5L2 24z" fill={fill} stroke="#3a7a48" strokeOpacity=".45" />
    {open && <path d="M0 16l4-5h20l6 17H7z" fill={fill} stroke="#5aa868" strokeOpacity=".7" />}
    <path d="M30 9v19.500H6" fill="none" stroke="#2c5c38" strokeOpacity=".55" strokeWidth="2" />
  </svg>
);

const Book = () => (
  <svg viewBox="0 0 32 30" className="h-[30px] w-8">
    <path d="M0 17L14 1l18 6v6L18 29 1 22z" fill="#7a1046" />
    <path d="M2 19l16 6L31 11v2L18 27 2 21z" fill="#e8e8e8" />
    <path d="M0 16L14 1l17 6-14 15z" fill="url(#book)" />
  </svg>
);

const OpenBook = () => (
  <svg viewBox="0 0 32 30" className="h-[30px] w-8">
    <path d="M0 16L14 2l16-1L18 16z" fill="url(#book)" />
    <path d="M0 17l18-1 4 8H4z" fill="#4a0c2c" />
    <path d="M19 15l5-5 8 5-8 9z" fill="#e6e6e6" stroke="#aaa" />
  </svg>
);

const Bench = () => (
  <svg viewBox="0 0 30 28" className="h-7 w-[30px]" fill="none">
    <path d="M2 8l6 4L17 2" stroke="#2fae52" strokeWidth="5" />
    <path d="M14 13l13 13M27 13L14 26" stroke="#f06868" strokeWidth="5.500" />
  </svg>
);

type Row = { l: 1 | 2 | 3; plus: boolean; icon: ReactNode; name: string; w: number; sel?: boolean };
const rows: Row[] = [
  { l: 1, plus: true, icon: <Book />, name: "TestBenchLibrary", w: 164 },
  { l: 1, plus: false, icon: <Folder fill="url(#gFolder)" open />, name: "Testing", w: 67 },
  { l: 2, plus: false, icon: <Folder fill="url(#gFolder)" open />, name: "DynamicsSim", w: 124 },
  { l: 3, plus: true, icon: <Bench />, name: "PowerAnalysis", w: 135, sel: true },
  { l: 3, plus: true, icon: <Bench />, name: "PowerAnalysis_DesignSpace", w: 275 },
  { l: 3, plus: true, icon: <Bench />, name: "PowerAnalysis_v2", w: 172 },
  { l: 3, plus: true, icon: <Bench />, name: "PowerAnalysis_v2_DS", w: 213 },
  { l: 2, plus: true, icon: <Folder fill="url(#gFolder)" />, name: "FEA_StructuralThermal", w: 216 },
  { l: 2, plus: true, icon: <Folder fill="url(#gFolder)" />, name: "GeometryAndIntertial", w: 195 },
  { l: 2, plus: true, icon: <Folder fill="url(#gFolder)" />, name: "ModelAttrubutes", w: 152 },
  { l: 2, plus: true, icon: <Folder fill="url(#bFolder)" />, name: "ParametricExploration", w: 201 },
  { l: 2, plus: true, icon: <Folder fill="url(#rFolder)" />, name: "WorkflowDefinitions", w: 187 },
  { l: 1, plus: false, icon: <OpenBook />, name: "UnitLibrary QUDT", w: 166 },
];

const guide = "h-full border-l-2 border-dotted border-[#9a9a9a]";

const TreeRow = ({ r }: { r: Row }) => (
  <div className="flex h-8 items-center">
    <div className="w-[60px]" />
    {r.l > 1 && <div className={`w-[38px] ${guide}`} />}
    {r.l > 2 && <div className={`w-[38px] ${guide}`} />}
    <div className="-ml-2 flex size-[18px] shrink-0 items-center justify-center rounded-[3px] border-2 border-[#9a9a9a] bg-[#f6f6f6]">
      <svg viewBox="0 0 12 12" className="size-3" stroke="#2c4a9c" strokeWidth="2">
        <path d={r.plus ? "M0 6h12M6 0v12" : "M0 6h12"} />
      </svg>
    </div>
    <i className="mr-px ml-0.5 w-2.5 border-t-2 border-dotted border-[#8a8a8a]" />
    <div className="flex w-8 shrink-0 justify-center">{r.icon}</div>
    <div className={`ml-1.5 flex h-8 items-center px-1 ${r.sel ? "bg-[#f0f0f0]" : ""}`}>
      <T w={r.w}>{r.name}</T>
    </div>
  </div>
);

function GmeBrowser() {
  return (
    <section className="flex h-[586px] flex-col bg-[#f0f0f0]">
      <PanelHeader title="GME Browser" w={137} />
      <div className="z-10 mt-0.5 -mb-0.5 ml-px flex items-end">
        <div className="flex h-[43px] w-[128px] items-center border-2 border-b-0 border-[#acacac] bg-white pb-2 pl-[13px]">
          <T w={97}>Aggregate</T>
        </div>
        <div className="mb-0.5 flex">
          <Tab label="Inheritance" w={105} h="h-[37px]" box="w-[128px] pl-[8px]" />
          <Tab label="Meta" w={47} h="h-[37px]" box="w-[80px] pl-[9px]" />
        </div>
      </div>
      <div className="ml-px h-[504px] w-[538px] border-2 border-[#acacac] bg-white px-[5px] pt-[3px]">
        <div className="flex h-[42px] items-center justify-between border-2 border-[#abadb3] pr-2 pl-1">
          <T w={134}>PowerAnalysis</T>
          <Chev dir="d" />
        </div>
        <div className="mt-0.5 h-[446px] border-2 border-[#828790] p-0.5">
          <div className="flex h-[408px]">
            <div className="h-full w-[486px] overflow-hidden">
              {rows.map((r) => (
                <TreeRow key={r.name} r={r} />
              ))}
            </div>
            <div className="flex w-8 flex-col items-center bg-[#f0f0f0]">
              <div className="mt-2 h-4">
                <Chev dir="u" />
              </div>
              <div className="mt-4 h-[33px] w-[30px] bg-[#cdcdcd]" />
              <div className="mt-auto mb-2.5 h-4">
                <Chev dir="d" />
              </div>
            </div>
          </div>
          <div className="flex h-[30px] items-center bg-[#f0f0f0] pl-2">
            <Chev dir="l" />
            <div className="ml-2 h-[30px] w-[288px] bg-[#cdcdcd]" />
            <div className="ml-[138px]">
              <Chev dir="r" />
            </div>
          </div>
        </div>
      </div>
    </section>
  );
}

function Inspector() {
  return (
    <section className="mt-[9px] flex flex-1 flex-col bg-[#f0f0f0]">
      <PanelHeader title="Object Inspector" w={169} />
      <div className="mt-1 flex-1 border-t-2 border-r-4 border-b-4 border-l-2 border-t-white border-r-[#7c7c7c] border-b-[#8a8a8a] border-l-white pl-2.5">
        <div className="mt-1.5 flex items-center">
          <div className="flex h-[46px] w-[386px] items-center border-2 border-[#abadb3] bg-white pb-2 pl-1">
            <T w={110}>AtLeast14V</T>
          </div>
          <div className="ml-3.5 size-[26px] border-2 border-[#bcbcbc] bg-[#e6e6e6]" />
          <div className="ml-2 text-[#7c7c7c]">
            <T w={71}>for Kind</T>
          </div>
        </div>
        <div className="relative z-10 mt-[6px] -mb-0.5 flex items-end">
          <div className="flex h-[43px] w-[120px] items-center border-2 border-b-0 border-[#acacac] bg-white pb-1.5 pl-[14px]">
            <T w={88}>Attributes</T>
          </div>
          <div className="mb-0.5 flex">
            <Tab label="Preferences" w={113} h="h-[37px]" box="w-[134px] pl-[7px]" />
            <Tab label="Properties" w={93} h="h-[37px]" box="w-[114px] pl-[11px]" />
          </div>
        </div>
        <div className="h-[402px] w-[516px] border-2 border-[#acacac] bg-white p-px px-1.5">
          <div className="h-[394px] border-2 border-[#828790] pt-px pr-1 pl-0.5">
            {[
              ["TargetType", 108, "Must Exceed", 123],
              ["TargetValue", 113, "14", 23],
            ].map(([a, aw, b, bw]) => (
              <div key={a as string} className="flex h-8 border-b-2 border-[#e0e0e0]">
                <div className="flex w-[197px] items-center border-r-2 border-[#e0e0e0] pl-px">
                  <T w={aw as number}>{a as string}</T>
                </div>
                <div className="flex items-center pl-[3px]">
                  <T w={bw as number}>{b as string}</T>
                </div>
              </div>
            ))}
          </div>
        </div>
        <div className="mt-[22px] h-[57px] w-[519px] border-2 border-t-[#a0a0a0] border-r-white border-b-white border-l-[#a0a0a0]" />
      </div>
    </section>
  );
}

const Status = ({ w, box, children, on = false }: { w: number; box: string; children: string; on?: boolean }) => (
  <div className={`flex h-8 items-center border-r-2 border-[#d0d0d0] pt-0.5 ${box} ${on ? "text-black" : "text-[#6e6e6e]"}`}>
    <T w={w}>{children}</T>
  </div>
);

const menus: [string, number, string][] = [
  ["File", 36, "ml-[22px]"],
  ["Edit", 39, "ml-[31px]"],
  ["View", 50, "ml-[30px]"],
  ["Tools", 53, "ml-[30px]"],
  ["Window", 88, "ml-[31px]"],
  ["Help", 47, "ml-[31px]"],
];

export default function App() {
  return (
    <div className="flex h-[1452px] w-[3388px] flex-col overflow-hidden border-2 border-[#d0d0d0] bg-[#ebebeb] font-['Liberation_Sans',Arial,sans-serif] text-black">
      <Defs />
      <header className="flex h-[58px] shrink-0 pl-[18px]">
        <svg viewBox="0 0 32 32" className="mt-3 size-8">
          <rect x="0" y="1" width="15" height="16" rx="6" fill="#24428c" />
          <rect x="16" y="1" width="15" height="16" rx="6" fill="#2a8a10" />
          <rect x="8" y="15" width="15" height="16" rx="6" fill="#c01414" />
          <path d="M4 5v6M20 5v6M12 18v6" stroke="#fff" strokeOpacity=".55" strokeWidth="2.500" />
        </svg>
        <div className="mt-3.5 ml-[1073px] font-['Open_Sans',sans-serif] text-[29px] leading-none text-[#2a2a2a]">
          <T w={1137}>CyPhyML - PowerAnalysis - /RootFolder/Testing/DynamicsSim/ (ExampleSat_3_1.mga)</T>
        </div>
        <i className="mt-6 ml-auto h-1 w-4 bg-[#222]" />
        <i className="mt-3 ml-[37px] h-4 w-5 border-2 border-t-4 border-[#222]" />
        <div className="mr-3 ml-4 flex h-10 w-[89px] items-center justify-center bg-[#bcbcbc]">
          <svg viewBox="0 0 16 14" className="mt-1 h-3.5 w-4" stroke="#fff" strokeWidth="3">
            <path d="M1 0l14 14M15 0L1 14" />
          </svg>
        </div>
      </header>

      <main className="mx-3 flex h-[1376px] shrink-0 flex-col border-t-2 border-r-2 border-[#d8d8d8] bg-linear-to-r from-[#d9d9d9] to-[#efefef]">
        <nav className="flex h-12 shrink-0 items-center pb-0.5 pl-2.5 font-['Open_Sans',sans-serif] text-[22px] leading-none">
          <HGrip />
          {menus.map(([m, w, ml]) => (
            <div key={m} className={ml}>
              <T w={w}>{m}</T>
            </div>
          ))}
        </nav>
        <div className="flex h-[50px] shrink-0 border-b-2 border-[#a6a6a6] pl-0.5">
          <Bar items="open save copy paste del | undo redo | find | print | help" lead="w-5" />
          <Bar items="refresh | z1 z2 | hash chip tree | up0 up1 up2" lead="w-[19px]" />
          <Bar items="panel | rows cols | ask" lead="w-4" />
          <Bar
            items="slash info wand flower graph gear transfer car arrowDn gearUp bin gearDn grid truck truckB cubes books fx zig swap python bars gear gear ok d mod nodes upBlue"
            lead="w-4"
            chevron={false}
          />
        </div>
        <div className="flex h-[1238px] shrink-0">
          <aside className="w-[52px] shrink-0 pl-1">
            <div className="h-[286px] rounded-md bg-linear-to-r from-white to-[#c4c4c4] pt-2">
              <VGrip />
              <div className="mt-2">
                {["cursor", "vz1", "vz2", "loopUp", "lens", "link"].map((k, i) => (
                  <div
                    key={k}
                    className={`mr-0.5 ml-0.5 flex h-11 items-center justify-center pr-1 ${i === 0 ? "border-2 border-[#3399ff] bg-[#dcebfa]" : ""}`}
                  >
                    {I[k]}
                  </div>
                ))}
              </div>
            </div>
            <div className="mt-px h-[504px] rounded-md bg-linear-to-r from-white to-[#c4c4c4] pt-1.5">
              <VGrip />
              <div className="mt-[7px]">
                {["back", "fwd", "home", "cyc", "cyc2", "x1", "x2", "x3", "boxes", "cross", "crossG"].map((k) => (
                  <div key={k} className="mx-0.5 flex h-11 items-center justify-center pr-1">
                    {I[k]}
                  </div>
                ))}
              </div>
            </div>
          </aside>
          <PartBrowser />
          <Editor />
          <div className="ml-2 flex w-[544px] shrink-0 flex-col text-[22px] leading-none">
            <GmeBrowser />
            <Inspector />
          </div>
        </div>
        <footer className="ml-[52px] flex flex-1 items-center border-y-2 border-[#dcdcdc] bg-[#f0f0f0] pl-[9px] font-['Open_Sans',sans-serif] text-[21px] leading-none">
          <div className="pt-0.5">
            <T w={61}>Ready</T>
          </div>
          <div className="ml-auto flex items-center">
            <Status w={39} box="w-[44px]">CAP</Status>
            <Status w={52} box="w-[64px] pl-[7px]" on>NUM</Status>
            <Status w={49} box="w-[62px] pl-[8px]">SCRL</Status>
            <Status w={43} box="w-[56px] pl-[8px]">EDIT</Status>
            <Status w={53} box="w-[66px] pl-[8px]">100%</Status>
            <Status w={88} box="w-[102px] pl-[8px]">CyPhyML</Status>
            <Status w={99} box="w-[118px] pl-[8px]">11:29  AM</Status>
            <svg viewBox="0 0 16 16" className="mt-2 mr-1.5 ml-[11px] size-4" fill="#b4b4b4">
              <path d="M12 0h4v4h-4zM6 6h4v4H6zM12 6h4v4h-4zM0 12h4v4H0zM6 12h4v4H6zM12 12h4v4h-4z" />
            </svg>
          </div>
        </footer>
      </main>
    </div>
  );
}
